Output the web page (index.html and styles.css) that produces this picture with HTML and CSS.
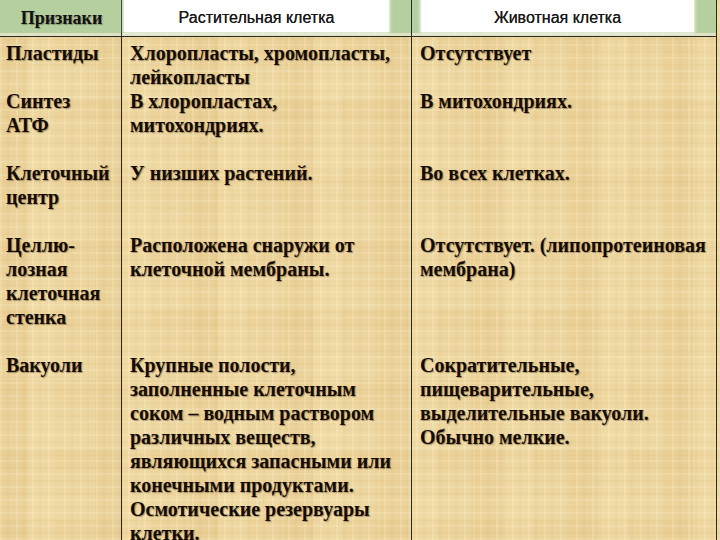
FILE: index.html
```html
<!DOCTYPE html>
<html lang="ru">
<head>
<meta charset="utf-8">
<title>Растительная и животная клетка</title>
<link rel="stylesheet" href="styles.css">
</head>
<body>
<div class="sheet">
  <div class="head">
    <div class="hcell first"><span>Признаки</span></div>
    <div class="hcell mid"><div class="plate">Растительная клетка</div></div>
    <div class="hcell last"><div class="plate">Животная клетка</div></div>
  </div>
  <div class="grid">
    <div class="c c1 top">Пластиды</div>
    <div class="c c2 top">Хлоропласты, хромопласты,<br>лейкопласты</div>
    <div class="c c3 top">Отсутствует</div>

    <div class="c c1 gap">Синтез<br>АТФ</div>
    <div class="c c2 gap">В хлоропластах,<br>митохондриях.</div>
    <div class="c c3 gap">В митохондриях.</div>

    <div class="c c1 gap">Клеточный<br>центр</div>
    <div class="c c2 gap">У низших растений.</div>
    <div class="c c3 gap">Во всех клетках.</div>

    <div class="c c1 gap">Целлю-<br>лозная<br>клеточная<br>стенка</div>
    <div class="c c2 gap">Расположена снаружи от<br>клеточной мембраны.</div>
    <div class="c c3 gap">Отсутствует. (липопротеиновая<br>мембрана)</div>

    <div class="c c1">Вакуоли</div>
    <div class="c c2">Крупные полости,<br>заполненные клеточным<br>соком – водным раствором<br>различных веществ,<br>являющихся запасными или<br>конечными продуктами.<br>Осмотические резервуары<br>клетки.</div>
    <div class="c c3">Сократительные,<br>пищеварительные,<br>выделительные вакуоли.<br>Обычно мелкие.</div>
  </div>
</div>
</body>
</html>
```
FILE: styles.css
```css
html, body {
  margin: 0;
  padding: 0;
  width: 720px;
  height: 540px;
  overflow: hidden;
}
body {
  background:
    repeating-linear-gradient(90deg, rgba(255,246,215,0.22) 0 2px, transparent 2px 7px, rgba(190,150,80,0.07) 7px 9px, transparent 9px 16px),
    repeating-linear-gradient(0deg, rgba(255,246,215,0.18) 0 2px, transparent 2px 6px, rgba(190,150,80,0.06) 6px 8px, transparent 8px 13px),
    repeating-linear-gradient(90deg, rgba(225,190,125,0.18) 0 28px, rgba(248,230,180,0.2) 28px 58px, transparent 58px 95px),
    repeating-linear-gradient(0deg, rgba(225,190,125,0.12) 0 20px, rgba(248,232,185,0.15) 20px 44px, transparent 44px 70px),
    #ecd59e;
}
.sheet {
  width: 717px;
}
.head {
  display: grid;
  grid-template-columns: 121px 290px 306px;
  height: 36px;
  border-bottom: 1px solid #2a2a22;
  background: #b6cf9f;
  box-shadow: inset 0 -3px 0 #dfe3c4;
}
.hcell {
  box-sizing: border-box;
  height: 36px;
  display: flex;
  padding-bottom: 4px;
}
.hcell.first {
  align-items: center;
  justify-content: center;
  font-family: "Liberation Serif", "Times New Roman", serif;
  font-weight: bold;
  font-size: 18px;
  color: #111;
  text-shadow: 1px 1px 1px rgba(0,0,0,0.3);
  padding-top: 5px;
  padding-left: 2px;
}
.hcell.mid {
  border-left: 1px solid #2a2a22;
  padding-left: 2px;
  padding-right: 22px;
}
.hcell.last {
  border-left: 1px solid #2a2a22;
  border-right: 1px solid #2a2a22;
  padding-left: 9px;
  padding-right: 22px;
}
.plate {
  flex: 1;
  background: #fff;
  box-shadow: 0 0 3px 1px rgba(255,255,255,0.8);
  display: flex;
  align-items: center;
  justify-content: center;
  font-family: "Liberation Sans", Arial, sans-serif;
  font-size: 16px;
  color: #1a1a1a;
  text-shadow: 0 0 0.4px #1a1a1a;
  padding-top: 3px;
}
.grid {
  display: grid;
  grid-template-columns: 121px 290px 306px;
}
.c {
  box-sizing: border-box;
  font-family: "Liberation Serif", "Times New Roman", serif;
  font-weight: bold;
  font-size: 20px;
  line-height: 24px;
  color: #140c04;
  text-shadow: 1px 1px 1px rgba(60,40,10,0.4);
  white-space: nowrap;
}
.c1 {
  padding-left: 6px;
}
.c2 {
  border-left: 1px solid #2a2a22;
  padding-left: 8px;
}
.c3 {
  border-left: 1px solid #2a2a22;
  border-right: 1px solid #2a2a22;
  padding-left: 8px;
}
.top {
  padding-top: 4px;
}
.gap {
  padding-bottom: 24px;
}
```
